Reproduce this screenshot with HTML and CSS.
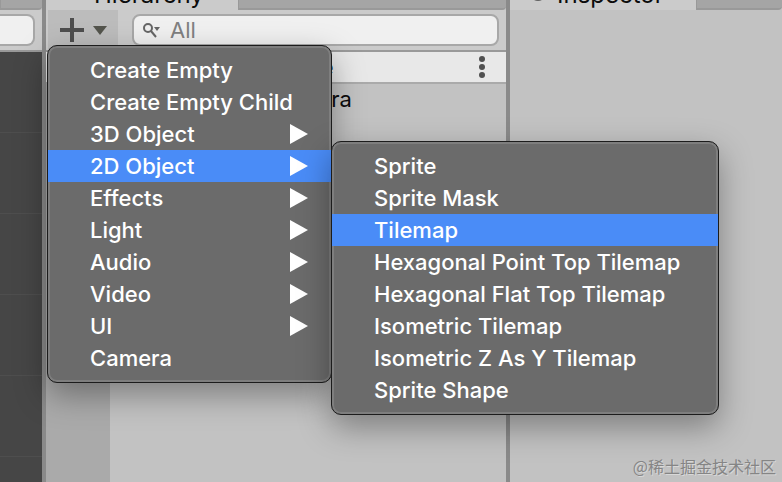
FILE: index.html
```html
<!DOCTYPE html>
<html lang="en">
<head>
    <meta charset="utf-8">
    <title>Hierarchy</title>
    <link rel="stylesheet" href="styles.css">
</head>
<body>
    <div class="editor">
        <section class="pane scene">
            <div class="tabs"><div class="tab-rest"></div></div>
            <div class="toolbar">
                <input class="scene-search" type="text" aria-label="Search scene">
            </div>
            <div class="viewport"></div>
        </section>

        <section class="pane hierarchy">
            <div class="tabs">
                <div class="tab">Hierarchy</div>
                <div class="tab-rest"></div>
            </div>
            <div class="toolbar">
                <div class="create">
                    <button class="create-button" aria-label="Create">
                        <svg width="48" height="24" viewBox="0 0 48 24">
                            <path d="M12 0v24M0 12h24" stroke="#4e4e4e" stroke-width="4"/>
                            <path d="M33 8h14l-7 9z" fill="#53544c"/>
                        </svg>
                    </button>
                    <ul class="menu">
                        <li><button>Create Empty</button></li>
                        <li><button>Create Empty Child</button></li>
                        <li><button class="more">3D Object</button></li>
                        <li>
                            <button class="more active">2D Object</button>
                            <ul class="menu submenu">
                                <li><button>Sprite</button></li>
                                <li><button>Sprite Mask</button></li>
                                <li><button class="active">Tilemap</button></li>
                                <li><button>Hexagonal Point Top Tilemap</button></li>
                                <li><button>Hexagonal Flat Top Tilemap</button></li>
                                <li><button>Isometric Tilemap</button></li>
                                <li><button>Isometric Z As Y Tilemap</button></li>
                                <li><button>Sprite Shape</button></li>
                            </ul>
                        </li>
                        <li><button class="more">Effects</button></li>
                        <li><button class="more">Light</button></li>
                        <li><button class="more">Audio</button></li>
                        <li><button class="more">Video</button></li>
                        <li><button class="more">UI</button></li>
                        <li><button>Camera</button></li>
                    </ul>
                </div>
                <label class="search">
                    <svg width="20" height="18" viewBox="0 0 20 18">
                        <circle cx="6" cy="7" r="4" fill="none" stroke="#666" stroke-width="2"/>
                        <path d="M9 10l5 6" stroke="#666" stroke-width="2"/>
                        <path d="M12 6h6l-3 4z" fill="#666"/>
                    </svg>
                    <input type="text" placeholder="All" aria-label="Search hierarchy">
                </label>
            </div>
            <div class="scene-row">
                <span>SampleScene</span>
                <button class="dots" aria-label="Scene options">
                    <svg width="6" height="22" viewBox="0 0 6 22" fill="#505050">
                        <circle cx="3" cy="3" r="3"/>
                        <circle cx="3" cy="11" r="3"/>
                        <circle cx="3" cy="19" r="3"/>
                    </svg>
                </button>
            </div>
            <div class="tree">
                <div class="gutter"></div>
                <div class="object">Main Camera</div>
            </div>
        </section>

        <section class="pane inspector">
            <div class="tabs">
                <div class="tab">
                    <svg width="18" height="18" viewBox="0 0 18 18">
                        <circle cx="9" cy="8" r="8" fill="#606060"/>
                        <path d="M9 6v7M6 13h6" stroke="#cbcbcb" stroke-width="2"/>
                    </svg>
                    Inspector
                </div>
                <div class="tab-rest"></div>
            </div>
            <div class="watermark">@稀土掘金技术社区</div>
        </section>
    </div>
</body>
</html>
```

FILE: styles.css
```css
:root {
    --panel: #c2c2c2;
    --bar: #cbcbcb;
    --tab-back: #a5a5a5;
    --line: #999999;
    --divider: #8a8a8a;
    --highlight: #4a8cf7;
}

* {
    box-sizing: border-box;
}

body {
    margin: 0;
    font-family: Inter, "Liberation Sans", sans-serif;
    font-size: 22px;
    color: #0c0c0c;
    overflow: hidden;
}

button,
input {
    font: inherit;
    border: none;
    margin: 0;
    padding: 0;
}

.editor {
    display: grid;
    grid-template-columns: 42px 460px 1fr;
    gap: 4px;
    min-height: 100vh;
    background: var(--divider);
}

.pane {
    display: flex;
    flex-direction: column;
    min-width: 0;
    background: var(--panel);
}

/* only the bottom edge of the tab strip is in view */
.tabs {
    display: flex;
    align-items: flex-end;
    height: 10px;
    overflow: hidden;
}

.tab {
    display: flex;
    align-items: center;
    gap: 10px;
    height: 32px;
    padding-left: 48px;
    background: var(--bar);
    font-size: 24px;
}

.hierarchy .tab {
    width: 192px;
}

.inspector .tab {
    width: 186px;
    padding-left: 19px;
}

.tab-rest {
    flex: 1;
    height: 32px;
    background: var(--tab-back);
    border: 2px solid var(--line);
    border-width: 0 0 2px 1px;
    border-radius: 0 0 4px 0;
}

.toolbar {
    display: flex;
    align-items: center;
    height: 42px;
    background: var(--bar);
    border-bottom: 2px solid var(--line);
}

.scene-search,
.search {
    height: 32px;
    background: #f0f0f0;
    border: 2px solid #a8a8a8;
    border-radius: 8px;
}

.scene-search {
    width: 35px;
    border-left: none;
    border-radius: 0 8px 8px 0;
}

.viewport {
    flex: 1;
    background: repeating-linear-gradient(#464646 0 80px, #4e4e4e 80px 81px);
}

.create {
    position: relative;
    align-self: stretch;
    margin-left: 2px;
}

.create-button {
    width: 70px;
    height: 100%;
    padding-left: 12px;
    background: #bcbcbc;
    display: flex;
    align-items: center;
}

.search {
    display: flex;
    align-items: center;
    flex: 1;
    gap: 8px;
    min-width: 0;
    margin: 0 7px 0 14px;
    padding-left: 8px;
}

.search input {
    flex: 1;
    min-width: 0;
    background: none;
}

.search input::placeholder {
    color: #808080;
    opacity: 1;
}

.scene-row {
    display: flex;
    align-items: center;
    justify-content: space-between;
    height: 32px;
    padding: 0 21px 0 145px;
    background: #e8e8e8;
    border-bottom: 2px solid #aaaaaa;
}

.dots {
    display: flex;
    background: none;
}

.tree {
    flex: 1;
    display: flex;
}

.gutter {
    width: 64px;
    background: #aaaaaa;
}

.object {
    padding-left: 104px;
    line-height: 30px;
}

.menu {
    position: absolute;
    top: 35px;
    left: -1px;
    z-index: 1;
    width: 285px;
    margin: 0;
    padding: 8px 0;
    list-style: none;
    background: #6b6b6b;
    border: 1px solid #1c1c1c;
    border-radius: 10px;
    box-shadow: inset 0 0 0 2px #7e7e7e, 0 12px 32px rgba(0, 0, 0, 0.35);
}

.menu li {
    position: relative;
}

.menu button {
    display: flex;
    align-items: center;
    justify-content: space-between;
    width: 100%;
    height: 32px;
    padding: 0 23px 0 42px;
    background: none;
    color: #ffffff;
    font-weight: 500;
    text-align: left;
    white-space: nowrap;
}

.menu button.active {
    background: var(--highlight);
}

.more::after {
    content: "";
    border: solid transparent;
    border-width: 10px 0 10px 18px;
    border-left-color: #ffffff;
}

.submenu {
    top: -9px;
    left: 100%;
    width: 388px;
}

.watermark {
    margin: auto 6px 4px auto;
    font-family: "Noto Sans CJK SC", sans-serif;
    font-size: 16px;
    line-height: 24px;
    color: #858585;
    text-shadow: 1px 1px 0 #d8d8d8;
}
```
